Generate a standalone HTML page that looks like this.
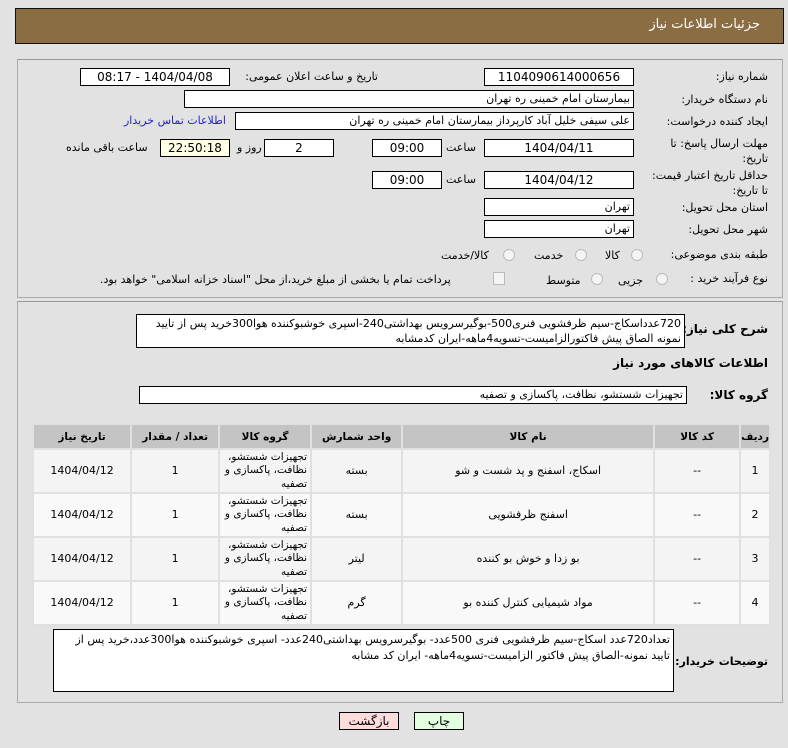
<!DOCTYPE html>
<html><head><meta charset="utf-8">
<style>
*{box-sizing:border-box;margin:0;padding:0}
body{width:788px;height:748px;background:#e2e2e2;font-family:"DejaVu Sans","Liberation Sans",sans-serif;font-size:11px;color:#000;position:relative;overflow:hidden;direction:rtl}
.a{position:absolute;white-space:nowrap}
.box{position:absolute;background:#fff;border:1px solid #000;text-align:center;line-height:16px;white-space:nowrap;overflow:hidden;font-size:12px}
.r{text-align:right;padding-right:3px;font-size:11px}
.lbl{position:absolute;white-space:nowrap;text-align:right}
.panel{position:absolute;border:1px solid #aaa;border-top-color:#999;background:#e2e2e2}
.radio{position:absolute;width:12px;height:12px;border-radius:50%;border:1px solid #bbb;background:#f4f4f4}
table{position:absolute;border-collapse:separate;border-spacing:2px;background:#e0e0e0;left:32px;top:423px;width:739px;font-size:11px}
th{background:#c4c4c4;height:23px;font-weight:bold;font-size:10.5px}
td{text-align:center;line-height:14px}
td.g{font-size:10.5px;text-align:right;padding-right:3px;line-height:13.5px}
tr.o td{background:#f4f4f4}
tr.e td{background:#f9f9f9}
</style></head><body>
<div class="a" style="left:15px;top:8px;width:769px;height:36px;background:#8b6d43;border:1px solid #111"></div>
<div class="a" style="right:28px;top:17px;color:#fff;font-size:13px">جزئیات اطلاعات نیاز</div>

<div class="panel" style="left:17px;top:59px;width:766px;height:239px"></div>
<div class="panel" style="left:17px;top:301px;width:766px;height:402px"></div>

<div class="lbl" style="right:20px;top:70px">شماره نیاز:</div>
<div class="box" style="left:484px;top:68px;width:150px;height:18px">1104090614000656</div>
<div class="lbl" style="right:410px;top:70px">تاریخ و ساعت اعلان عمومی:</div>
<div class="box" style="left:80px;top:68px;width:150px;height:18px">1404/04/08 - 08:17</div>

<div class="lbl" style="right:20px;top:93px">نام دستگاه خریدار:</div>
<div class="box r" style="left:184px;top:90px;width:450px;height:18px">بیمارستان امام خمینی ره  تهران</div>

<div class="lbl" style="right:20px;top:115px">ایجاد کننده درخواست:</div>
<div class="box r" style="left:235px;top:112px;width:399px;height:18px">علی سیفی خلیل آباد کارپرداز بیمارستان امام خمینی ره  تهران</div>
<div class="lbl" style="left:124px;top:114px;color:#2323cc">اطلاعات تماس خریدار</div>

<div class="lbl" style="right:20px;top:136px;line-height:15px">مهلت ارسال پاسخ: تا<br>تاریخ:</div>
<div class="box" style="left:484px;top:139px;width:150px;height:18px">1404/04/11</div>
<div class="lbl" style="left:446px;top:141px">ساعت</div>
<div class="box" style="left:372px;top:139px;width:70px;height:18px">09:00</div>
<div class="box" style="left:264px;top:139px;width:70px;height:18px">2</div>
<div class="lbl" style="left:237px;top:141px">روز و</div>
<div class="box" style="left:160px;top:139px;width:70px;height:18px;background:#ffffe6">22:50:18</div>
<div class="lbl" style="left:66px;top:141px">ساعت باقی مانده</div>

<div class="lbl" style="right:20px;top:168px;line-height:15px">حداقل تاریخ اعتبار قیمت:<br>تا تاریخ:</div>
<div class="box" style="left:484px;top:171px;width:150px;height:18px">1404/04/12</div>
<div class="lbl" style="left:446px;top:173px">ساعت</div>
<div class="box" style="left:372px;top:171px;width:70px;height:18px">09:00</div>

<div class="lbl" style="right:20px;top:201px">استان محل تحویل:</div>
<div class="box r" style="left:484px;top:198px;width:150px;height:18px">تهران</div>
<div class="lbl" style="right:20px;top:223px">شهر محل تحویل:</div>
<div class="box r" style="left:484px;top:220px;width:150px;height:18px">تهران</div>

<div class="lbl" style="right:20px;top:248px">طبقه بندی موضوعی:</div>
<div class="radio" style="left:631px;top:249px"></div><div class="lbl" style="left:605px;top:249px">کالا</div>
<div class="radio" style="left:575px;top:249px"></div><div class="lbl" style="left:534px;top:249px">خدمت</div>
<div class="radio" style="left:503px;top:249px"></div><div class="lbl" style="left:441px;top:249px">کالا/خدمت</div>

<div class="lbl" style="right:20px;top:272px">نوع فرآیند خرید :</div>
<div class="radio" style="left:656px;top:273px"></div><div class="lbl" style="left:618px;top:274px">جزیی</div>
<div class="radio" style="left:591px;top:273px"></div><div class="lbl" style="left:546px;top:274px">متوسط</div>
<div class="a" style="left:493px;top:272px;width:12px;height:13px;border:1px solid #bbb;background:#f4f4f4"></div>
<div class="lbl" style="left:100px;top:273px">پرداخت تمام یا بخشی از مبلغ خرید،از محل "اسناد خزانه اسلامی" خواهد بود.</div>

<div class="lbl" style="right:20px;top:322px;font-weight:bold;font-size:12px">شرح کلی نیاز:</div>
<div class="box" style="left:136px;top:314px;width:549px;height:34px;text-align:right;padding:1px 3px;white-space:normal;line-height:15px;font-size:11px">720عدداسکاج-سیم ظرفشویی فنری500-بوگیرسرویس بهداشتی240-اسپری خوشبوکننده هوا300خرید پس از تایید نمونه الصاق پیش فاکتورالزامیست-تسویه4ماهه-ایران کدمشابه</div>

<div class="lbl" style="right:20px;top:356px;font-weight:bold;font-size:12px">اطلاعات کالاهای مورد نیاز</div>
<div class="lbl" style="right:20px;top:388px;font-weight:bold;font-size:12px">گروه کالا:</div>
<div class="box r" style="left:139px;top:386px;width:548px;height:18px">تجهیزات شستشو، نظافت، پاکسازی و تصفیه</div>

<table>
<tr><th style="width:27px">ردیف</th><th style="width:84px">کد کالا</th><th style="width:250px">نام کالا</th><th style="width:89px">واحد شمارش</th><th style="width:90px">گروه کالا</th><th style="width:86px">تعداد / مقدار</th><th>تاریخ نیاز</th></tr>
<tr class="o" style="height:42px"><td>1</td><td>--</td><td>اسکاج، اسفنج و پد شست و شو</td><td>بسته</td><td class="g">تجهیزات شستشو، نظافت، پاکسازی و تصفیه</td><td>1</td><td>1404/04/12</td></tr>
<tr class="e" style="height:42px"><td>2</td><td>--</td><td>اسفنج ظرفشویی</td><td>بسته</td><td class="g">تجهیزات شستشو، نظافت، پاکسازی و تصفیه</td><td>1</td><td>1404/04/12</td></tr>
<tr class="o" style="height:42px"><td>3</td><td>--</td><td>بو زدا و خوش بو کننده</td><td>لیتر</td><td class="g">تجهیزات شستشو، نظافت، پاکسازی و تصفیه</td><td>1</td><td>1404/04/12</td></tr>
<tr class="e" style="height:42px"><td>4</td><td>--</td><td>مواد شیمیایی کنترل کننده بو</td><td>گرم</td><td class="g">تجهیزات شستشو، نظافت، پاکسازی و تصفیه</td><td>1</td><td>1404/04/12</td></tr>
</table>

<div class="lbl" style="right:20px;top:655px;font-weight:bold;font-size:11px">توضیحات خریدار:</div>
<div class="box" style="left:53px;top:629px;width:621px;height:63px;text-align:right;padding:2px 3px;white-space:normal;line-height:16px;font-size:11px">تعداد720عدد اسکاج-سیم ظرفشویی فنری 500عدد- بوگیرسرویس بهداشتی240عدد- اسپری خوشبوکننده هوا300عدد،خرید پس از تایید نمونه-الصاق پیش فاکتور الزامیست-تسویه4ماهه- ایران کد مشابه</div>

<div class="box" style="left:339px;top:712px;width:60px;height:18px;background:#ffdcdc">بازگشت</div>
<div class="box" style="left:414px;top:712px;width:50px;height:18px;background:#e2ffe0">چاپ</div>
</body></html>
